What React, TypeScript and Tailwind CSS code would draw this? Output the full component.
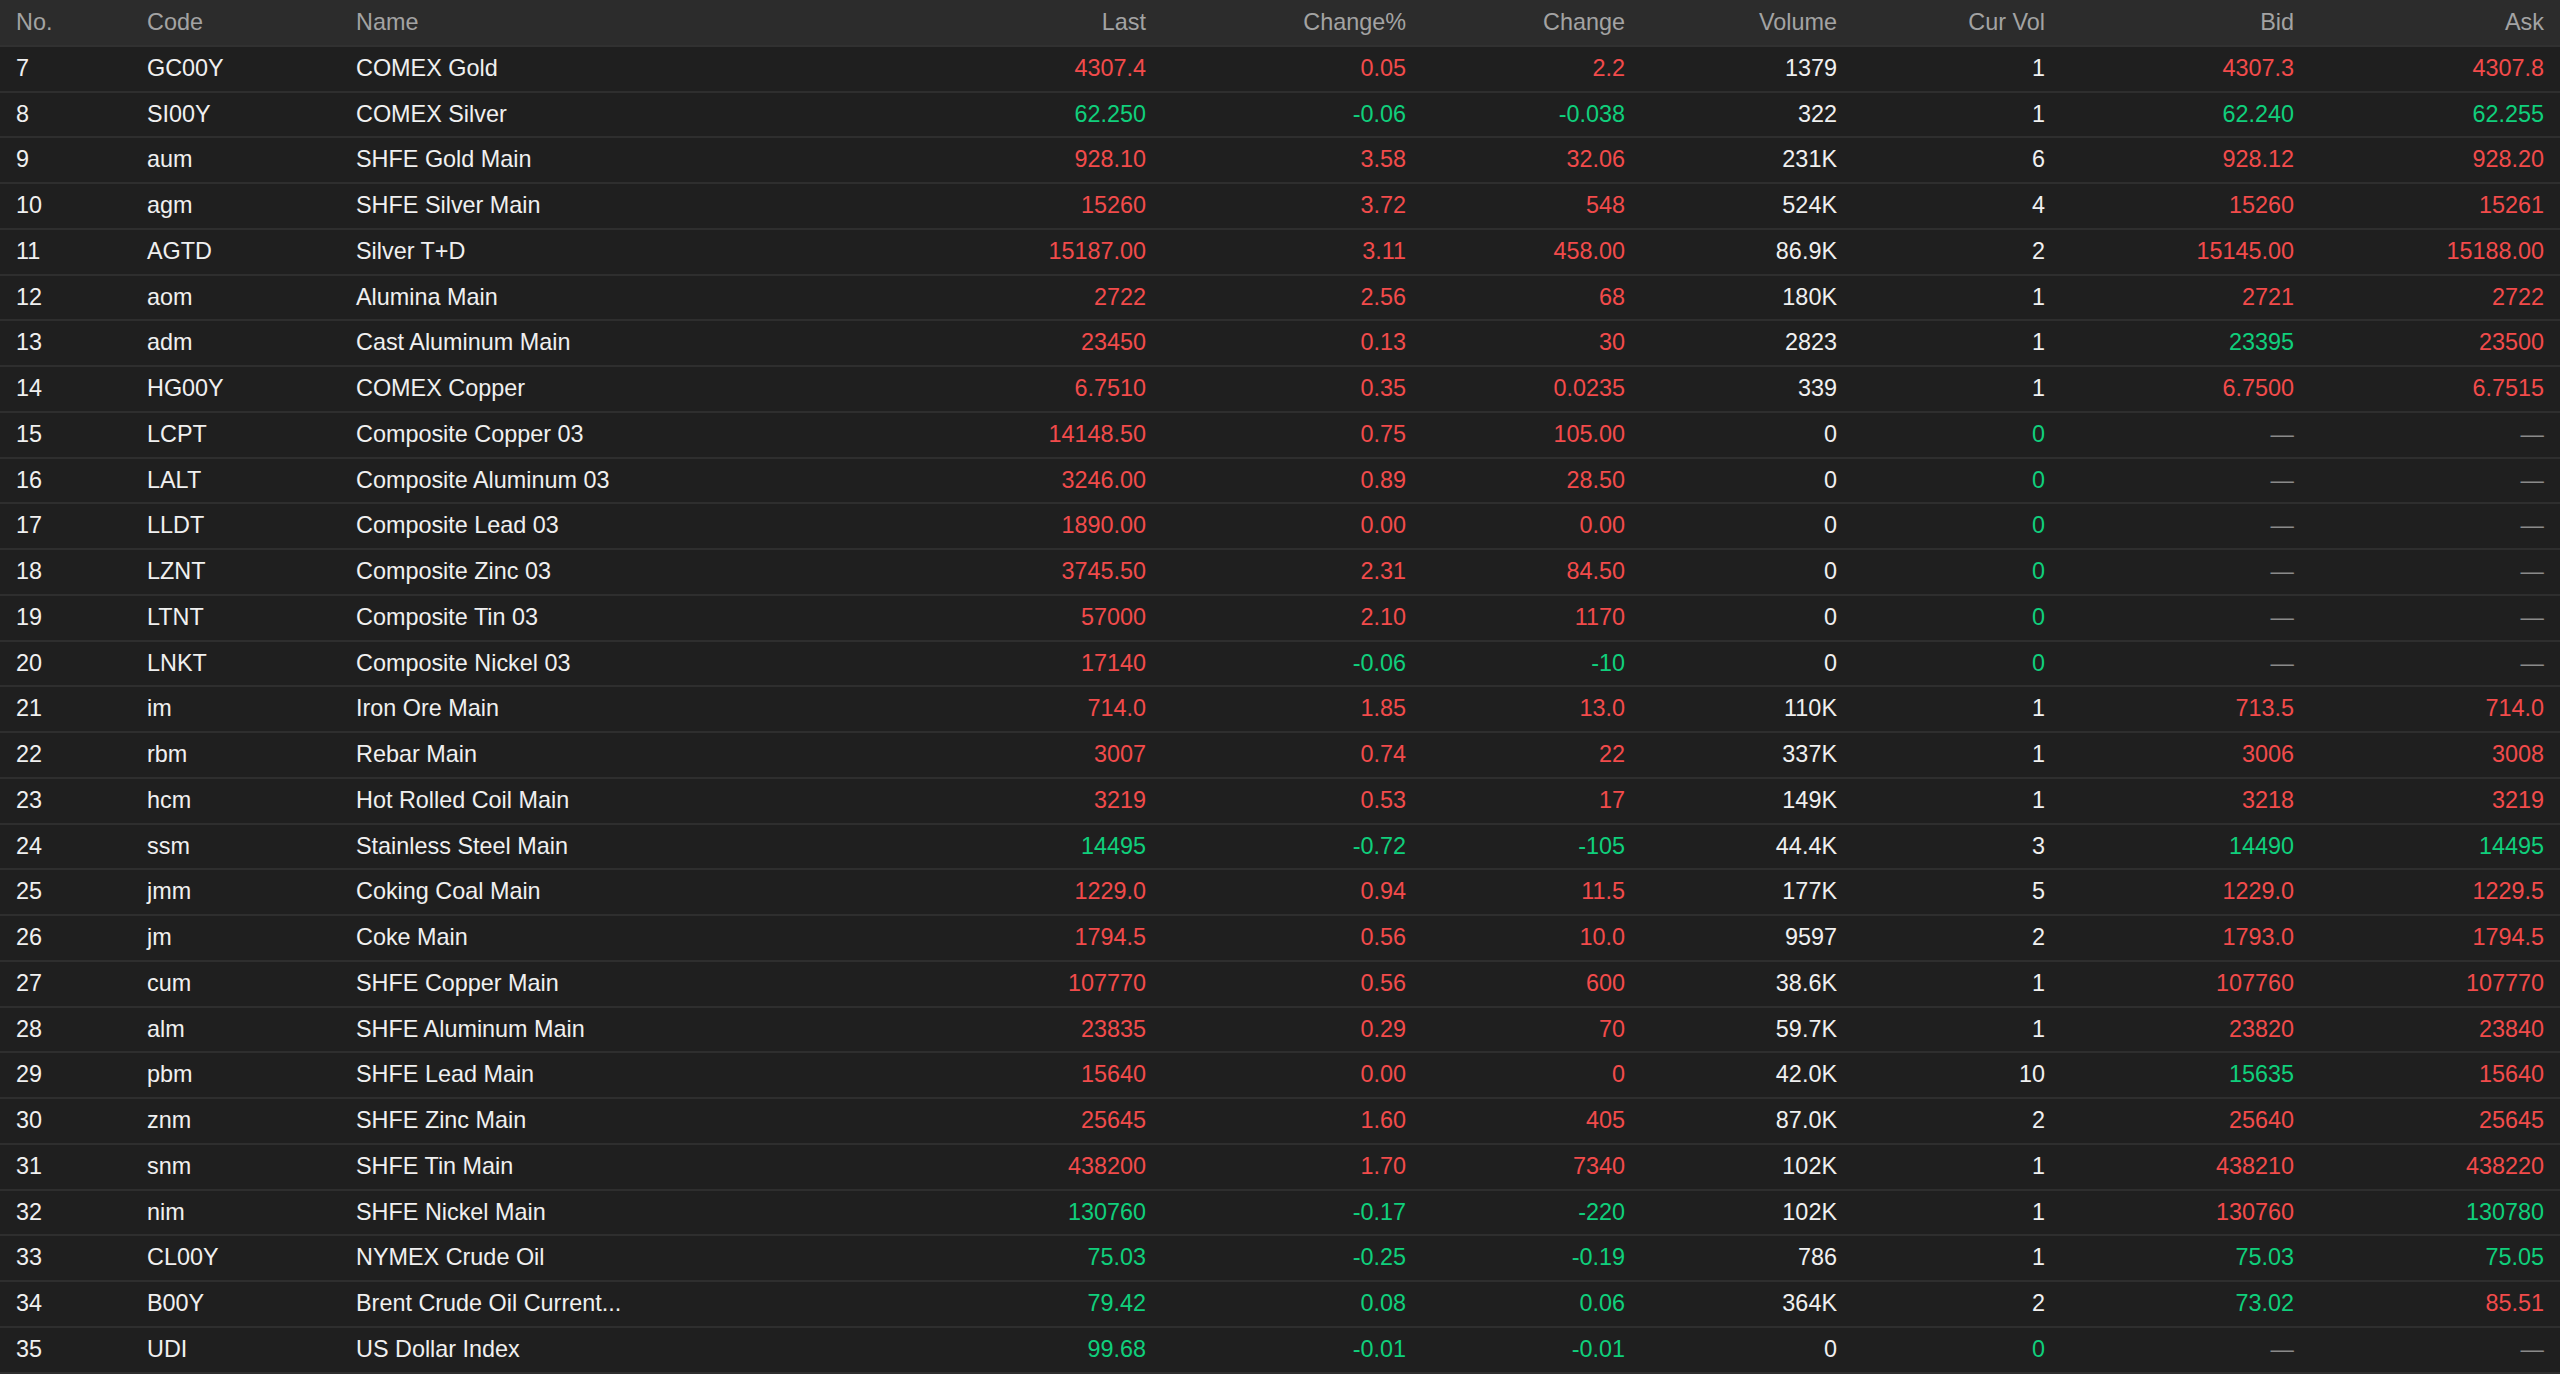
import React from "react";

type Tone = "r" | "g" | "w" | "d";

// colour keys, in order: last, change%, change, cur vol, bid, ask
const rows: Array<[string, string, string, string, string, string, string, string, string, string, string]> = [
    ["7", "GC00Y", "COMEX Gold", "4307.4", "0.05", "2.2", "1379", "1", "4307.3", "4307.8", "rrrwrr"],
    ["8", "SI00Y", "COMEX Silver", "62.250", "-0.06", "-0.038", "322", "1", "62.240", "62.255", "gggwgg"],
    ["9", "aum", "SHFE Gold Main", "928.10", "3.58", "32.06", "231K", "6", "928.12", "928.20", "rrrwrr"],
    ["10", "agm", "SHFE Silver Main", "15260", "3.72", "548", "524K", "4", "15260", "15261", "rrrwrr"],
    ["11", "AGTD", "Silver T+D", "15187.00", "3.11", "458.00", "86.9K", "2", "15145.00", "15188.00", "rrrwrr"],
    ["12", "aom", "Alumina Main", "2722", "2.56", "68", "180K", "1", "2721", "2722", "rrrwrr"],
    ["13", "adm", "Cast Aluminum Main", "23450", "0.13", "30", "2823", "1", "23395", "23500", "rrrwgr"],
    ["14", "HG00Y", "COMEX Copper", "6.7510", "0.35", "0.0235", "339", "1", "6.7500", "6.7515", "rrrwrr"],
    ["15", "LCPT", "Composite Copper 03", "14148.50", "0.75", "105.00", "0", "0", "—", "—", "rrrgdd"],
    ["16", "LALT", "Composite Aluminum 03", "3246.00", "0.89", "28.50", "0", "0", "—", "—", "rrrgdd"],
    ["17", "LLDT", "Composite Lead 03", "1890.00", "0.00", "0.00", "0", "0", "—", "—", "rrrgdd"],
    ["18", "LZNT", "Composite Zinc 03", "3745.50", "2.31", "84.50", "0", "0", "—", "—", "rrrgdd"],
    ["19", "LTNT", "Composite Tin 03", "57000", "2.10", "1170", "0", "0", "—", "—", "rrrgdd"],
    ["20", "LNKT", "Composite Nickel 03", "17140", "-0.06", "-10", "0", "0", "—", "—", "rgggdd"],
    ["21", "im", "Iron Ore Main", "714.0", "1.85", "13.0", "110K", "1", "713.5", "714.0", "rrrwrr"],
    ["22", "rbm", "Rebar Main", "3007", "0.74", "22", "337K", "1", "3006", "3008", "rrrwrr"],
    ["23", "hcm", "Hot Rolled Coil Main", "3219", "0.53", "17", "149K", "1", "3218", "3219", "rrrwrr"],
    ["24", "ssm", "Stainless Steel Main", "14495", "-0.72", "-105", "44.4K", "3", "14490", "14495", "gggwgg"],
    ["25", "jmm", "Coking Coal Main", "1229.0", "0.94", "11.5", "177K", "5", "1229.0", "1229.5", "rrrwrr"],
    ["26", "jm", "Coke Main", "1794.5", "0.56", "10.0", "9597", "2", "1793.0", "1794.5", "rrrwrr"],
    ["27", "cum", "SHFE Copper Main", "107770", "0.56", "600", "38.6K", "1", "107760", "107770", "rrrwrr"],
    ["28", "alm", "SHFE Aluminum Main", "23835", "0.29", "70", "59.7K", "1", "23820", "23840", "rrrwrr"],
    ["29", "pbm", "SHFE Lead Main", "15640", "0.00", "0", "42.0K", "10", "15635", "15640", "rrrwgr"],
    ["30", "znm", "SHFE Zinc Main", "25645", "1.60", "405", "87.0K", "2", "25640", "25645", "rrrwrr"],
    ["31", "snm", "SHFE Tin Main", "438200", "1.70", "7340", "102K", "1", "438210", "438220", "rrrwrr"],
    ["32", "nim", "SHFE Nickel Main", "130760", "-0.17", "-220", "102K", "1", "130760", "130780", "gggwrg"],
    ["33", "CL00Y", "NYMEX Crude Oil", "75.03", "-0.25", "-0.19", "786", "1", "75.03", "75.05", "gggwgg"],
    ["34", "B00Y", "Brent Crude Oil Current...", "79.42", "0.08", "0.06", "364K", "2", "73.02", "85.51", "gggwgr"],
    ["35", "UDI", "US Dollar Index", "99.68", "-0.01", "-0.01", "0", "0", "—", "—", "ggggdd"],
];

const toneClass: Record<Tone, string> = {
    r: "text-[#f24b4b]",
    g: "text-[#10cf7c]",
    w: "text-[#f0f0f0]",
    d: "text-[#8a8a8a]",
};

const cols = "grid grid-cols-[131px_209px_400px_422px_260px_219px_212px_208px_249px_250px]";

function Num({ value, tone }: { value: string; tone: Tone }) {
    return <div className={`px-4 text-right whitespace-nowrap ${toneClass[tone]}`}>{value}</div>;
}

export default function App() {
    const heads = ["Last", "Change%", "Change", "Volume", "Cur Vol", "Bid", "Ask"];

    return (
        <div className="w-full bg-white" style={{ fontFamily: '"Liberation Sans", Arial, sans-serif' }}>
            <div className="text-[23.4px] leading-none">
                <div className={`${cols} items-center h-[46.75px] bg-[#2c2c2c] border-b-2 border-[#313131] text-[#a3a3a3]`}>
                    <div className="px-4">No.</div>
                    <div className="px-4">Code</div>
                    <div className="px-4">Name</div>
                    {heads.map((h) => (
                        <div key={h} className="px-4 text-right">
                            {h}
                        </div>
                    ))}
                </div>

                {rows.map((r) => {
                    const t = r[10].split("") as Tone[];
                    return (
                        <div
                            key={r[0]}
                            className={`${cols} items-center h-[45.75px] bg-[#1f1f1f] border-b-2 border-[#2e2e2e] text-[#f0f0f0]`}
                        >
                            <div className="px-4">{r[0]}</div>
                            <div className="px-4">{r[1]}</div>
                            <div className="px-4 whitespace-nowrap">{r[2]}</div>
                            <Num value={r[3]} tone={t[0]} />
                            <Num value={r[4]} tone={t[1]} />
                            <Num value={r[5]} tone={t[2]} />
                            <Num value={r[6]} tone="w" />
                            <Num value={r[7]} tone={t[3]} />
                            <Num value={r[8]} tone={t[4]} />
                            <Num value={r[9]} tone={t[5]} />
                        </div>
                    );
                })}
            </div>
        </div>
    );
}
